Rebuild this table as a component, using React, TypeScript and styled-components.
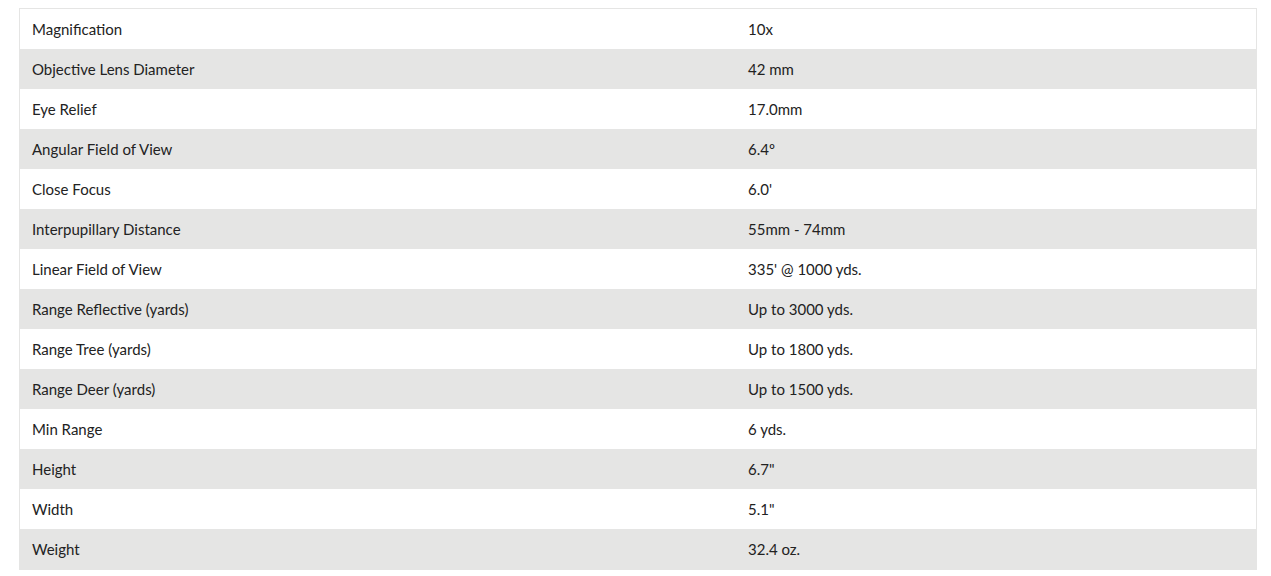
import React from "react";
import styled, { createGlobalStyle } from "styled-components";

const Global = createGlobalStyle`
  html, body { margin: 0; padding: 0; background: #fff; }
  body { font-family: Lato, "Liberation Sans", sans-serif; }
`;

const Wrap = styled.div`
  padding: 8px 14px 0 19px;
`;

const Table = styled.table`
  width: 1238px;
  border-collapse: separate;
  border-spacing: 0;
  border: 1px solid #e5e5e4;
  font-family: Lato, "Liberation Sans", sans-serif;
  font-size: 15px;
  color: #222;
`;

const Row = styled.tr<{ $alt: boolean }>`
  background: ${(p) => (p.$alt ? "#e5e5e4" : "#fff")};
`;

const Cell = styled.td<{ $w?: string }>`
  height: 40px;
  box-sizing: border-box;
  padding: 0 0 0 12px;
  vertical-align: middle;
  width: ${(p) => p.$w || "auto"};
  line-height: 20px;
`;

const specs: [string, string][] = [
  ["Magnification", "10x"],
  ["Objective Lens Diameter", "42 mm"],
  ["Eye Relief", "17.0mm"],
  ["Angular Field of View", "6.4º"],
  ["Close Focus", "6.0'"],
  ["Interpupillary Distance", "55mm - 74mm"],
  ["Linear Field of View", "335' @ 1000 yds."],
  ["Range Reflective (yards)", "Up to 3000 yds."],
  ["Range Tree (yards)", "Up to 1800 yds."],
  ["Range Deer (yards)", "Up to 1500 yds."],
  ["Min Range", "6 yds."],
  ["Height", "6.7\""],
  ["Width", "5.1\""],
  ["Weight", "32.4 oz."],
];

export default function App() {
  return (
    <>
      <Global />
      <Wrap>
        <Table>
          <tbody>
            {specs.map(([k, v], i) => (
              <Row key={k} $alt={i % 2 === 1}>
                <Cell $w="716px">{k}</Cell>
                <Cell>{v}</Cell>
              </Row>
            ))}
          </tbody>
        </Table>
      </Wrap>
    </>
  );
}
